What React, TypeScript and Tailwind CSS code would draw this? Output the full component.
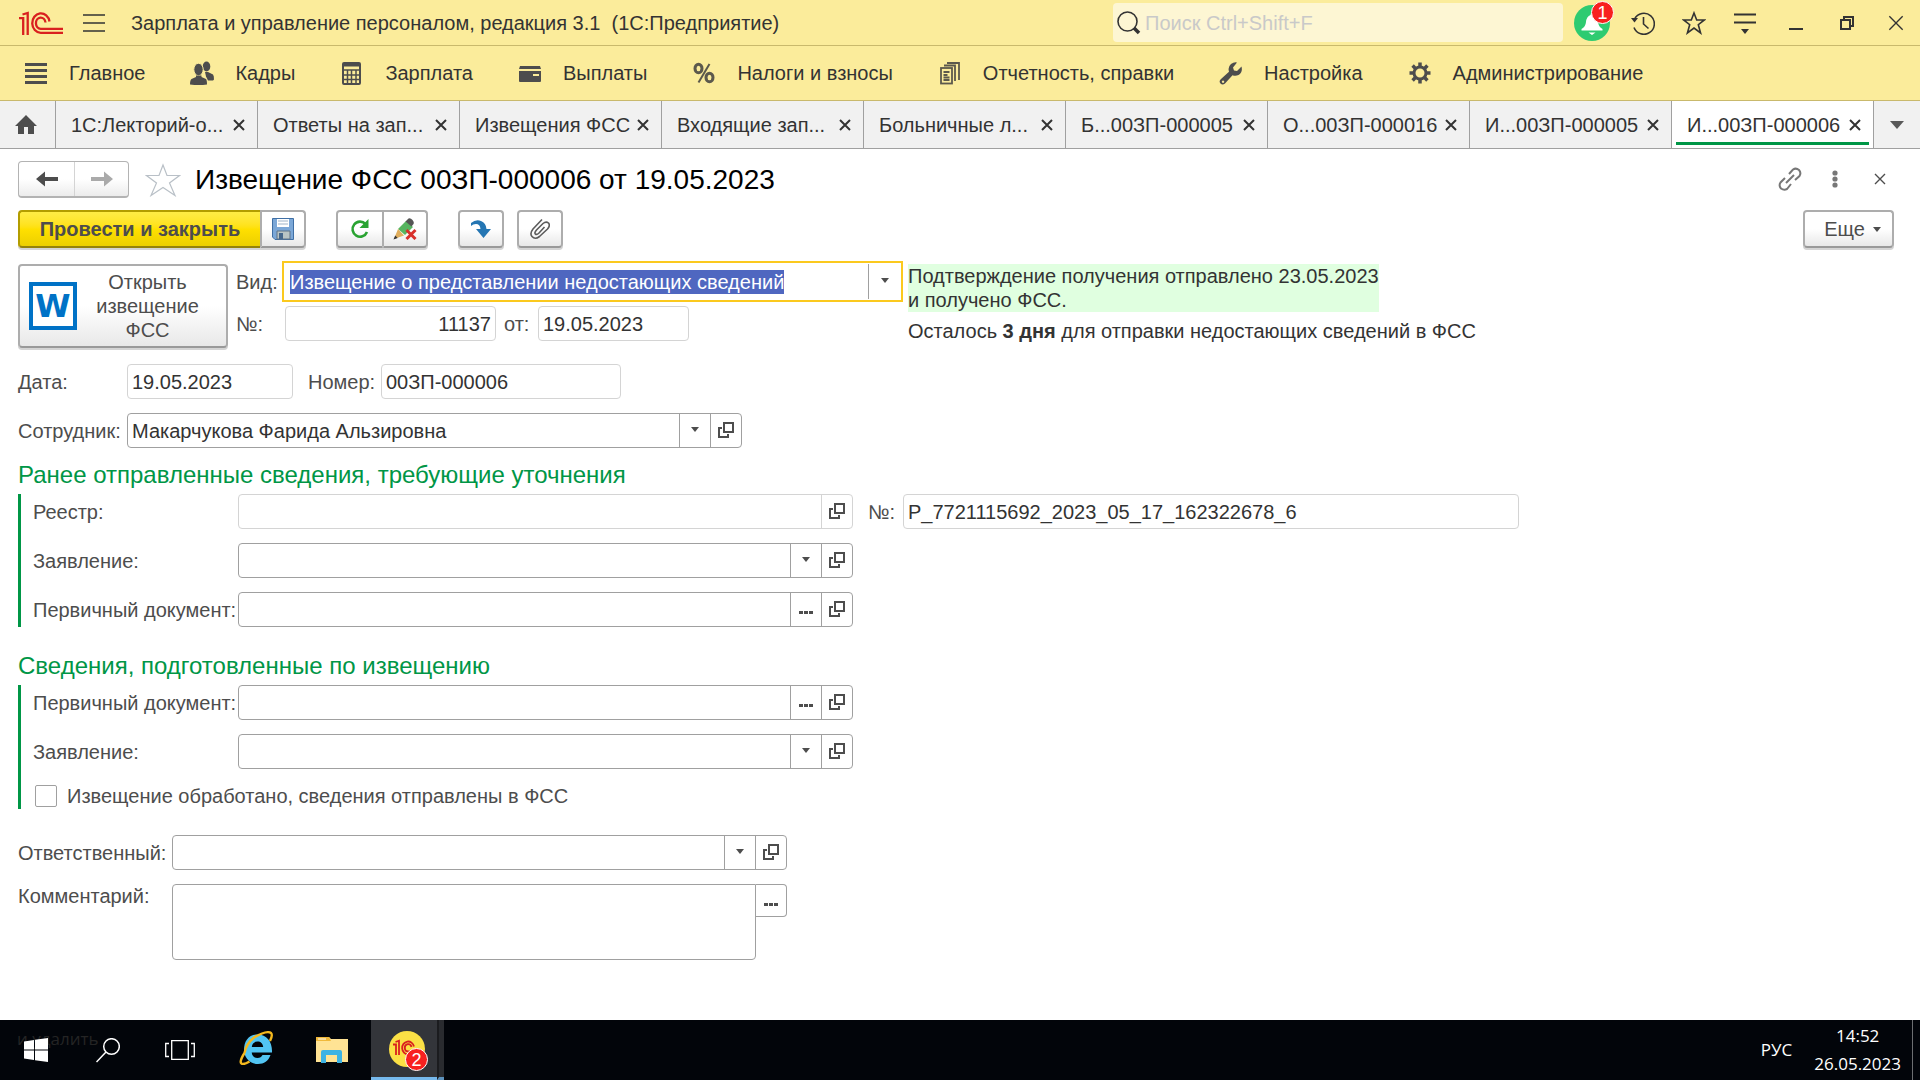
import React, { useEffect, useRef } from 'react';
import clsx from 'clsx';

const sections = [
  { title: 'Главное', icon: 'main' },
  { title: 'Кадры', icon: 'people' },
  { title: 'Зарплата', icon: 'calc' },
  { title: 'Выплаты', icon: 'card' },
  { title: 'Налоги и взносы', icon: 'percent' },
  { title: 'Отчетность, справки', icon: 'docs' },
  { title: 'Настройка', icon: 'wrench' },
  { title: 'Администрирование', icon: 'gear' },
];

const tabs = [
  '1С:Лекторий-о...',
  'Ответы на зап...',
  'Извещения ФСС',
  'Входящие зап...',
  'Больничные л...',
  'Б...00ЗП-000005',
  'О...00ЗП-000016',
  'И...00ЗП-000005',
  'И...00ЗП-000006',
];

const SectionIcon = ({ name }: { name: string }) => {
  switch (name) {
    case 'main':
      return (
        <svg width="24" height="24" viewBox="0 0 24 24" stroke="#4d4d4d" strokeWidth="3">
          <path d="M1 3.500h22M1 9.500h22M1 15.500h22M1 21.500h22" />
        </svg>
      );
    case 'people':
      return (
        <svg width="24" height="24" viewBox="0 0 24 24" fill="#4d4d4d">
          <ellipse cx="16.500" cy="5.500" rx="3.800" ry="5" />
          <path d="M15 11h3l5 2.500q1 1 1 5l-1 1h-5l-2-4z" />
          <ellipse cx="8.500" cy="8.500" rx="4.700" ry="6.200" stroke="#fbec9b" />
          <path d="M6 14.500h5.500v1.500l4.500 2q1 1 1 5.500-8 1-17 0 0-4.500 1.500-5.500l4.500-2z" />
        </svg>
      );
    case 'calc':
      return (
        <svg width="24" height="24" viewBox="0 0 24 24" fill="none" stroke="#4d4d4d" strokeWidth="2">
          <rect x="3" y="2" width="17" height="21" rx="1" />
          <path d="M3 4h17" strokeWidth="3" />
          <path d="M3 9h17M3 14h17M3 18.500h17M7.500 9v14M11.500 9v14M16 9v14" strokeWidth="1.500" />
        </svg>
      );
    case 'card':
      return (
        <svg width="24" height="24" viewBox="0 0 24 24" fill="#4d4d4d">
          <path d="M2 5h20l1 3H1z" />
          <path d="M1 10h22v10q0 1-1 1H2q-1 0-1-1zM15 13v2h6v-2z" fillRule="evenodd" />
        </svg>
      );
    case 'percent':
      return (
        <svg width="24" height="24" viewBox="0 0 24 24" fill="none" stroke="#5c594c" strokeWidth="3">
          <ellipse cx="6.500" cy="7.500" rx="3.500" ry="4.200" />
          <ellipse cx="17.500" cy="16.500" rx="3.500" ry="4.200" />
          <path d="M17.500 3L6.500 21.500" strokeWidth="2" />
        </svg>
      );
    case 'docs':
      return (
        <svg width="24" height="24" viewBox="0 0 24 24" fill="none" stroke="#5c594c" strokeWidth="1.800">
          <rect x="3" y="7" width="11" height="15.500" />
          <path d="M6 4.500h11V20M9 2h12v17M5.500 11h6M5.500 14h4M5.500 16.500h6M5.500 19h6" />
        </svg>
      );
    case 'wrench':
      return (
        <svg width="24" height="24" viewBox="0 0 24 24" fill="#4d4d4d">
          <path d="M18 1.500l-4 5 1 3 3 .5 4.500-4.500q1.500 6-3 8.500-3 1.500-6 .2L6 22.500Q3.500 24.500 1.500 22.500T2 18l8-7.200Q8.500 6 12 3q3-2.200 6-1.500zM4 19.500a1.200 1.200 0 1 0 .1 0z" fillRule="evenodd" />
        </svg>
      );
    default:
      return (
        <svg width="24" height="24" viewBox="0 0 24 24" fill="none" stroke="#4d4d4d">
          <circle cx="12" cy="12" r="6" strokeWidth="3" />
          <path d="M12 1.500v4M12 18.500v4M1.500 12h4M18.500 12h4M4.600 4.600l2.800 2.800M16.600 16.600l2.800 2.800M4.600 19.400l2.800-2.800M16.600 7.400l2.800-2.800" strokeWidth="3.500" />
        </svg>
      );
  }
};

const Cross = ({ size = 12, width = 2 }: { size?: number; width?: number }) => (
  <svg width={size} height={size} viewBox="0 0 12 12" stroke="currentColor" strokeWidth={width}>
    <path d="M1 1l10 10M11 1L1 11" />
  </svg>
);

const Arrow = () => (
  <svg width="8" height="5" viewBox="0 0 8 5" fill="#4d4d4d">
    <path d="M0 0h8L4 5z" />
  </svg>
);

const Dots = () => (
  <svg width="14" height="14" viewBox="0 0 14 14" fill="#4d4d4d">
    <path d="M0 9h4v3H0zM5 9h4v3H5zM10 9h4v3h-4z" />
  </svg>
);

const OpenIcon = () => (
  <svg width="16" height="16" viewBox="0 0 16 16" fill="none" stroke="#4d4d4d" strokeWidth="2">
    <path d="M6 1h9v9H6zM4 6H1v9h9v-3" />
  </svg>
);

const Logo = () => (
  <svg width="44" height="24" viewBox="0 0 44 24" fill="none" stroke="#d9201f" strokeWidth="2.300">
    <path d="M0 7.200h4.200V24M3.500 3.500L8.700 2V24" />
    <path d="M30.500 10.500a8.700 9.700 0 1 0-8.800 11.300H44" />
    <path d="M26.500 11.500a4.800 5.600 0 1 0-4.800 6.300H44" />
  </svg>
);

interface ToolButtonProps {
  label: string;
  className?: string;
  children: React.ReactNode;
}

const ToolButton = ({ label, className, children }: ToolButtonProps) => (
  <button
    aria-label={label}
    className={clsx(
      'flex h-[38px] items-center justify-center border-2 border-[#adadad] border-b-[#999] bg-linear-to-b from-white from-50% to-[#e8e8e8] shadow-[0_2px_0_#d4d4d4]',
      className
    )}
  >
    {children}
  </button>
);

interface FieldProps {
  id: string;
  label?: string;
  value?: string;
  buttons?: ('list' | 'more' | 'open')[];
  readOnly?: boolean;
  alignRight?: boolean;
  className?: string;
}

const buttonIcons = { list: <Arrow />, more: <Dots />, open: <OpenIcon /> };
const buttonLabels = { list: 'Выбрать из списка', more: 'Выбрать', open: 'Открыть' };

const Field = ({ id, label, value = '', buttons = [], readOnly, alignRight, className }: FieldProps) => {
  const border = readOnly ? 'border-[#d4d4d4]' : 'border-[#a0a0a0]';
  return (
    <div className={clsx('flex h-[35px] max-w-full rounded border bg-white', border, className)}>
      <input
        id={id}
        aria-label={label}
        defaultValue={value}
        readOnly={readOnly}
        className={clsx('min-w-0 flex-1 px-1 text-[#333] outline-none', alignRight && 'text-right')}
      />
      {buttons.map((b) => (
        <button key={b} aria-label={buttonLabels[b]} className={clsx('flex w-[31px] items-center justify-center border-l pb-0.5', border)}>
          {buttonIcons[b]}
        </button>
      ))}
    </div>
  );
};

// Focused combo box, its text is selected as soon as the form opens
const KindField = () => {
  const ref = useRef<HTMLInputElement>(null);

  useEffect(() => {
    ref.current?.focus();
    ref.current?.select();
  }, []);

  return (
    <div className="flex h-[35px] w-[615px] max-w-full bg-white outline-2 outline-offset-1 outline-[#fbc91e]">
      <input
        id="kind"
        ref={ref}
        defaultValue="Извещение о представлении недостающих сведений"
        className="min-w-0 flex-1 px-[5px] text-[#333] outline-none selection:bg-[#4f67c0] selection:text-white"
      />
      <button aria-label="Выбрать из списка" className="flex w-8 items-center justify-center border-l border-[#a0a0a0] pb-0.5">
        <Arrow />
      </button>
    </div>
  );
};

const TopBar = () => (
  <header className="flex h-[46px] items-center border-b border-[#c9b96c] bg-[#fbec9b]">
    <div className="ml-[19px] mr-5">
      <Logo />
    </div>
    <button aria-label="Главное меню" className="mr-[26px]">
      <svg width="22" height="20" viewBox="0 0 22 20" stroke="#333" strokeWidth="1.500">
        <path d="M0 2h22M0 10h22M0 18h22" />
      </svg>
    </button>
    <h1 className="whitespace-pre">Зарплата и управление персоналом, редакция 3.1  (1С:Предприятие)</h1>
    <div className="ml-auto flex h-[39px] w-[450px] items-center rounded bg-[#fdf6d3] pl-1">
      <svg width="24" height="24" viewBox="0 0 24 24" fill="none" stroke="#333">
        <circle cx="10.500" cy="10.500" r="9.500" strokeWidth="1.600" />
        <path d="M17 17l5 5" strokeWidth="3.500" />
      </svg>
      <input aria-label="Поиск" placeholder="Поиск Ctrl+Shift+F" className="ml-1 min-w-0 flex-1 outline-none placeholder:text-[#c9c9c9]" />
    </div>
    <div className="ml-[3px] flex h-full text-[#333]">
      <button aria-label="Уведомления" className="relative flex w-[51px] items-center justify-center">
        <svg width="36" height="36" viewBox="0 0 36 36">
          <circle cx="18" cy="18" r="18" fill="#2ecb71" />
          <path d="M18 8q1.500 0 1.500 2 4 1.500 4.500 7 .5 5 4.500 7v1.500h-21V24q4-2 4.500-7 .5-5.500 4.500-7 0-2 1.500-2zM14.500 27.500h7L18 30z" fill="#fff" />
        </svg>
        <span className="absolute right-[3px] top-px flex size-[23px] items-center justify-center rounded-full border border-white bg-[#f8201f] text-lg leading-none text-white">
          1
        </span>
      </button>
      <button aria-label="История" className="flex w-[51px] items-center justify-center">
        <svg width="24" height="24" viewBox="0 0 24 24" fill="none" stroke="#333" strokeWidth="1.600">
          <path d="M3.500 8A10.500 10.500 0 1 1 3 16.500M12.500 6v7l5 4.500" />
          <path d="M0 7h7l-3.500 4.500z" fill="#333" stroke="none" />
        </svg>
      </button>
      <button aria-label="Избранное" className="flex w-[51px] items-center justify-center">
        <svg width="24" height="24" viewBox="0 0 24 24" fill="none" stroke="#333" strokeWidth="1.600">
          <path d="M12 2l2.700 7h7.600l-6 4.700 2.300 8.300-6.600-4.900L5.400 22l2.300-8.300-6-4.700h7.600z" />
        </svg>
      </button>
      <button aria-label="Настройки" className="flex w-[51px] items-center justify-center">
        <svg width="22" height="22" viewBox="0 0 22 22" stroke="#333" strokeWidth="1.800">
          <path d="M0 2.500h22M0 10.500h22" />
          <path d="M7 17h8l-4 5z" fill="#333" stroke="none" />
        </svg>
      </button>
      <button aria-label="Свернуть" className="flex w-[51px] items-center justify-center">
        <svg width="14" height="14" viewBox="0 0 14 14" fill="#333">
          <path d="M0 12h14v2H0z" />
        </svg>
      </button>
      <button aria-label="Развернуть" className="flex w-[51px] items-center justify-center">
        <svg width="14" height="14" viewBox="0 0 14 14" fill="none" stroke="#333" strokeWidth="2">
          <path d="M1 4h9v9H1zM4 4V1h9v9h-3" />
        </svg>
      </button>
      <button aria-label="Закрыть" className="flex w-12 items-center justify-center">
        <Cross size={16} width={1} />
      </button>
    </div>
  </header>
);

const SectionBar = () => (
  <nav className="flex h-[55px] items-center gap-[45px] border-b border-[#c9b96c] bg-[#fbec9b] pl-6">
    {sections.map((s) => (
      <a key={s.title} href="#" className="flex items-center gap-[21px] whitespace-nowrap">
        <SectionIcon name={s.icon} />
        {s.title}
      </a>
    ))}
  </nav>
);

const TabBar = () => (
  <div className="flex h-12 border-b border-[#a0a0a0] bg-[#f1f1f1]">
    <button aria-label="Начальная страница" className="flex w-[55px] items-center justify-center pr-1">
      <svg width="22" height="20" viewBox="0 0 22 20" fill="#4d4d4d">
        <path d="M11 0l11 11h-3v8h-6v-7H9v7H3v-8H0z" />
      </svg>
    </button>
    {tabs.map((tab, i) => (
      <div
        key={tab}
        className={clsx(
          'relative flex w-[202px] min-w-0 items-center justify-between border-l border-[#a0a0a0] pl-[15px] pr-3',
          i === tabs.length - 1 && 'bg-white'
        )}
      >
        <button className="whitespace-nowrap">{tab}</button>
        <button aria-label="Закрыть вкладку">
          <Cross />
        </button>
        {i === tabs.length - 1 && <span className="absolute inset-x-1 bottom-[3px] h-[3px] bg-[#009646]" />}
      </div>
    ))}
    <button aria-label="Список вкладок" className="flex flex-1 items-center justify-center border-l border-[#a0a0a0]">
      <svg width="14" height="8" viewBox="0 0 14 8" fill="#595959">
        <path d="M0 0h14L7 8z" />
      </svg>
    </button>
  </div>
);

const TitleRow = () => (
  <div className="flex items-center">
    <div className="flex h-[37px] rounded border border-b-2 border-[#b3b3b3] bg-linear-to-b from-white from-50% to-[#ececec]">
      <button aria-label="Назад" className="flex w-14 items-center justify-center border-r border-[#d4d4d4]">
        <svg width="22" height="16" viewBox="0 0 22 16" fill="#4d4d4d">
          <path d="M0 8l9-7.500V6h13v4H9v5.500z" />
        </svg>
      </button>
      <button aria-label="Вперед" className="flex w-[53px] items-center justify-center">
        <svg width="22" height="16" viewBox="0 0 22 16" fill="#aaa">
          <path d="M22 8l-9-7.500V6H0v4h13v5.500z" />
        </svg>
      </button>
    </div>
    <button aria-label="В избранное" className="ml-4">
      <svg width="36" height="34" viewBox="0 0 36 34" fill="none" stroke="#b9c0c7" strokeWidth="1.200">
        <path d="M18 2l4 10.500h12.500l-10 7.500L30 32.500l-12-8-12 8L11.500 20l-10-7.500H14z" />
      </svg>
    </button>
    <h2 className="ml-[14px] text-[28px] leading-8 text-black">Извещение ФСС 00ЗП-000006 от 19.05.2023</h2>
    <div className="ml-auto mr-[18px] flex items-center pb-0.5 text-[#4d4d4d]">
      <button aria-label="Получить ссылку" className="flex w-[45px] justify-center">
        <svg width="24" height="24" viewBox="0 0 24 24" fill="none" stroke="#777" strokeWidth="2">
          <path d="M8 16l8-8M11 7l4-4.500q3-2 6 .5 2.500 3 .5 6L17 13M7 11l-4.500 4.500q-2 3 .5 6 3 2 6 .5L13 17" />
        </svg>
      </button>
      <button aria-label="Дополнительно" className="flex w-[45px] justify-center">
        <svg width="6" height="18" viewBox="0 0 6 18" fill="#777">
          <circle cx="3" cy="3" r="2.600" />
          <circle cx="3" cy="9" r="2.600" />
          <circle cx="3" cy="15" r="2.600" />
        </svg>
      </button>
      <button aria-label="Закрыть форму" className="flex w-[45px] justify-center">
        <Cross size={12} width={1.4} />
      </button>
    </div>
  </div>
);

const Toolbar = () => (
  <div className="mt-3 flex">
    <button className="h-[38px] w-[242px] rounded-l border-2 border-r-0 border-[#b39d00] border-b-[#94820a] bg-linear-to-b from-[#ffec45] via-[#ffe000] to-[#eccf00] font-bold text-[#4d4d4d] shadow-[0_2px_0_#d4d4d4]">
      Провести и закрыть
    </button>
    <ToolButton label="Записать" className="w-[46px] rounded-r">
      <svg width="22" height="22" viewBox="0 0 22 22">
        <path d="M.5.500h21v21H3L.5 19z" fill="#7ba7d7" stroke="#3f6fa5" />
        <path d="M5 1h12v8H5z" fill="#fff" />
        <path d="M6 3h10M6 6h10" stroke="#9fb3c8" />
        <path d="M5 13h13v8H5z" fill="#b9c4c4" stroke="#5e7387" />
        <path d="M7 15h4v6H7z" fill="#47688c" />
      </svg>
    </ToolButton>
    <ToolButton label="Обновить" className="ml-[30px] w-[47px] rounded-l border-r">
      <svg width="20" height="20" viewBox="0 0 20 20" fill="none" stroke="#2aa332" strokeWidth="2.600">
        <path d="M15.500 5A7.500 7.500 0 1 0 17 13" />
        <path d="M18.500 0v9h-9z" fill="#2aa332" stroke="none" />
      </svg>
    </ToolButton>
    <ToolButton label="Отменить проведение" className="w-[45px] rounded-r border-l">
      <svg width="24" height="22" viewBox="0 0 24 22">
        <path d="M5 11L13 3l7 6-8 8z" fill="#57b560" />
        <path d="M12.500 3.500L15.500.500q2-.8 4 1.500t1 4l-2 2.500z" fill="#555" />
        <path d="M5 11l6 6.500L1 21z" fill="#e0ad5c" />
        <path d="M2.200 17.500l2.500 2.500L.5 21.500z" fill="#333" />
        <path d="M13.500 12l9 9M22.500 12l-9 9" stroke="#d8302b" strokeWidth="3" />
      </svg>
    </ToolButton>
    <ToolButton label="Перейти" className="ml-[30px] w-[46px] rounded">
      <svg width="20" height="18" viewBox="0 0 20 18" fill="#2576b3">
        <path d="M0 6V3q5-4 10-2 5 2 5.500 8H20l-7.500 9L5 9h4.500Q9 4 5 4 2 4 0 6z" />
      </svg>
    </ToolButton>
    <ToolButton label="Присоединенные файлы" className="ml-[13px] w-[46px] rounded">
      <svg width="20" height="22" viewBox="0 0 20 22" fill="none" stroke="#5c5c5c" strokeWidth="1.600">
        <path d="M12 1.500L3 11Q-.5 15.500 2 18.500q3 3.500 7.500 0L17.500 11q3-3.500 1-6-2.500-2-5.500.5L6.500 12Q4 15 5.500 16.200 7 17 9 15l5.500-6" />
      </svg>
    </ToolButton>
    <ToolButton label="Еще" className="ml-auto mr-[26px] w-[91px] gap-2 rounded pl-2 text-[#4d4d4d]">
      Еще
      <Arrow />
    </ToolButton>
  </div>
);

const NoticeBlock = () => (
  <div className="mt-4 flex items-start">
    <button className="flex h-[84px] w-[210px] shrink-0 items-center rounded border-2 border-[#adadad] border-b-[#999] bg-linear-to-b from-white from-50% to-[#e8e8e8] pl-[9px] leading-6 text-[#4d4d4d] shadow-[0_2px_0_#d4d4d4]">
      <span className="flex size-12 shrink-0 items-center justify-center border-4 border-[#0072c6] bg-white font-['DejaVu_Sans'] text-[32px] leading-none font-bold text-[#0072c6]">
        W
      </span>
      <span className="flex-1 pl-2 pr-4">Открыть извещение ФСС</span>
    </button>
    <div className="ml-2 flex flex-col gap-[7px]">
      <div className="flex items-center">
        <label htmlFor="kind" className="w-[49px] text-[#4d4d4d]">
          Вид:
        </label>
        <KindField />
      </div>
      <div className="flex items-center">
        <label htmlFor="notice-number" className="w-[49px] text-[#4d4d4d]">
          №:
        </label>
        <Field id="notice-number" value="11137" readOnly alignRight className="w-[211px]" />
        <label htmlFor="notice-date" className="ml-2 w-[34px] text-[#4d4d4d]">
          от:
        </label>
        <Field id="notice-date" value="19.05.2023" readOnly className="w-[151px]" />
      </div>
    </div>
    <div className="ml-2 whitespace-nowrap leading-6">
      <p className="w-fit bg-[#e0ffe0]">
        Подтверждение получения отправлено 23.05.2023
        <br />и получено ФСС.
      </p>
      <p className="mt-[7px]">
        Осталось <b>3 дня</b> для отправки недостающих сведений в ФСС
      </p>
    </div>
  </div>
);

interface RowProps extends FieldProps {
  caption: string;
  labelClass: string;
  children?: React.ReactNode;
}

const Row = ({ caption, labelClass, children, ...field }: RowProps) => (
  <div className="flex items-center">
    <label htmlFor={field.id} className={clsx('shrink-0 text-[#4d4d4d]', labelClass)}>
      {caption}
    </label>
    <Field {...field} className={field.className ?? 'w-[615px]'} />
    {children}
  </div>
);

const GroupTitle = ({ children }: { children: React.ReactNode }) => (
  <h3 className="mb-1 text-2xl leading-[30px] text-[#009646]">{children}</h3>
);

const Form = () => (
  <main className="flex-1 bg-white pb-14 pl-[18px] pt-3">
    <TitleRow />
    <Toolbar />
    <NoticeBlock />

    <div className="mt-4 flex flex-col gap-[14px]">
      <Row id="date" caption="Дата:" labelClass="w-[109px]" value="19.05.2023" readOnly className="w-[166px]">
        <label htmlFor="number" className="ml-[15px] w-[73px] text-[#4d4d4d]">
          Номер:
        </label>
        <Field id="number" value="00ЗП-000006" readOnly className="w-[240px]" />
      </Row>
      <Row id="employee" caption="Сотрудник:" labelClass="w-[109px]" value="Макарчукова Фарида Альзировна" buttons={['list', 'open']} />
    </div>

    <section className="mt-3">
      <GroupTitle>Ранее отправленные сведения, требующие уточнения</GroupTitle>
      <div className="flex flex-col gap-[14px] border-l-3 border-[#009646] pl-3">
        <Row id="registry" caption="Реестр:" labelClass="w-[205px]" readOnly buttons={['open']}>
          <label htmlFor="registry-number" className="ml-[15px] w-[35px] text-[#4d4d4d]">
            №:
          </label>
          <Field id="registry-number" value="Р_7721115692_2023_05_17_162322678_6" readOnly className="w-[616px]" />
        </Row>
        <Row id="application" caption="Заявление:" labelClass="w-[205px]" buttons={['list', 'open']} />
        <Row id="source-doc" caption="Первичный документ:" labelClass="w-[205px]" buttons={['more', 'open']} />
      </div>
    </section>

    <section className="mt-6">
      <GroupTitle>Сведения, подготовленные по извещению</GroupTitle>
      <div className="flex flex-col gap-[14px] border-l-3 border-[#009646] pb-0.5 pl-3">
        <Row id="prepared-doc" caption="Первичный документ:" labelClass="w-[205px]" buttons={['more', 'open']} />
        <Row id="prepared-app" caption="Заявление:" labelClass="w-[205px]" buttons={['list', 'open']} />
        <label className="mt-0.5 flex h-[22px] items-center text-[#4d4d4d]">
          <input type="checkbox" className="ml-0.5 mr-[10px] size-[22px] appearance-none rounded-xs border border-[#a0a0a0] bg-white" />
          Извещение обработано, сведения отправлены в ФСС
        </label>
      </div>
    </section>

    <div className="mt-[26px] flex flex-col gap-[14px]">
      <Row id="responsible" caption="Ответственный:" labelClass="w-[154px]" buttons={['list', 'open']} />
      <div className="flex items-start">
        <label htmlFor="comment" className="w-[154px] shrink-0 text-[#4d4d4d]">
          Комментарий:
        </label>
        <textarea id="comment" className="h-[76px] w-[584px] resize-none rounded rounded-tr-none border border-[#a0a0a0] px-1 outline-none" />
        <button aria-label="Открыть комментарий" className="flex h-[33px] w-[31px] items-center justify-center rounded-r border border-l-0 border-[#a0a0a0]">
          <Dots />
        </button>
      </div>
    </div>
  </main>
);

const Taskbar = () => (
  <footer className="relative flex h-[60px] items-center bg-[#02050a] font-['Open_Sans',sans-serif] text-[17px] text-white">
    <span className="absolute left-[17px] top-[7px] leading-6 text-[#242424]">и удалить</span>
    <button aria-label="Пуск" className="relative flex w-[72px] justify-center">
      <svg width="24" height="24" viewBox="0 0 24 24" fill="#fff">
        <path d="M0 3.500L10 2v9.500H0zM11 1.800L24 0v11.500H11zM0 12.500h10V22L0 20.500zM11 12.500h13V24l-13-1.800z" />
      </svg>
    </button>
    <button aria-label="Поиск" className="relative flex w-[72px] justify-center">
      <svg width="24" height="25" viewBox="0 0 24 25" fill="none" stroke="#fff" strokeWidth="1.500">
        <circle cx="15.500" cy="8.500" r="7.800" />
        <path d="M10 14L.5 24" />
      </svg>
    </button>
    <button aria-label="Представление задач" className="flex w-[72px] justify-center">
      <svg width="30" height="20" viewBox="0 0 30 20" fill="none" stroke="#fff" strokeWidth="1.300">
        <path d="M6.700.700h16.600v18.600H6.700zM4 3.500H.700v13H4M26 3.500h3.300v13H26" />
      </svg>
    </button>
    <button aria-label="Internet Explorer" className="ml-[3px] flex w-[74px] justify-center pb-1">
      <svg width="34" height="34" viewBox="0 0 34 34" fill="none">
        <path d="M18.500 3.500C9.500 3.500 5 10.500 5 18.500S10.500 33 19 33c6 0 10.500-3 12.500-9h-8c-1 2-2.500 3-5 3-3.200 0-5.500-2-5.800-5.500H33C33.500 11 28 3.500 18.500 3.500zM12.800 16c.4-3.500 2.500-5.500 5.700-5.500s5.400 2 5.700 5.500z" fill="#52c5f3" fillRule="evenodd" />
        <path d="M5.500 22C1 29 .5 33 4 33q2.500 0 6.500-2.500M5.500 22Q7 13 15 6.500 28-1 32 2q2 2-1 8" stroke="#f3b81e" strokeWidth="2.400" />
      </svg>
    </button>
    <button aria-label="Проводник" className="flex w-[78px] justify-center">
      <svg width="32" height="27" viewBox="0 0 32 27">
        <path d="M0 1q0-1 1-1h12l2 2h17v23H0z" fill="#ffe394" />
        <path d="M0 0h13l2 4H0z" fill="#f0b93a" />
        <path d="M2 2h8" stroke="#fff" />
        <path d="M5 26V15q0-2 2-2h17q2 0 2 2v11h-5v-8H10v8z" fill="#3db3e3" />
      </svg>
    </button>
    <div className="flex h-full">
      <button aria-label="1С:Предприятие" className="relative flex w-[66px] items-center justify-center border-b-3 border-[#76b9ed] bg-[#33353a] pl-[5px]">
        <svg width="36" height="36" viewBox="0 0 36 36" fill="none" stroke="#d9201f" strokeWidth="1.800">
          <circle cx="18" cy="18" r="18" fill="#fbe045" stroke="none" />
          <path d="M4 13.500h3V24M6.500 11L10 9.700V24M25 15.500a6 6.500 0 1 0-6 8h9M22.500 16a3.400 3.700 0 1 0-3.500 4.500h9" />
        </svg>
        <span className="absolute bottom-[6px] left-[34px] flex size-[23px] items-center justify-center rounded-full border border-white bg-[#f8201f] font-['Liberation_Sans',sans-serif] text-lg leading-none">
          2
        </span>
      </button>
      <span className="w-[7px] border-b-3 border-l-2 border-b-[#5d93be] border-l-[#1b1c1f] bg-[#292b2f]" />
    </div>
    <span className="ml-auto">РУС</span>
    <time className="ml-[22px] text-center leading-7">
      14:52
      <br />
      26.05.2023
    </time>
    <span className="ml-[11px] mr-[7px] h-full w-px bg-[#6c6e71]" />
  </footer>
);

export default function App() {
  return (
    <div className="flex min-h-screen flex-col bg-white font-['Liberation_Sans',Arial,sans-serif] text-xl leading-6 text-[#333]">
      <TopBar />
      <SectionBar />
      <TabBar />
      <Form />
      <Taskbar />
    </div>
  );
}
